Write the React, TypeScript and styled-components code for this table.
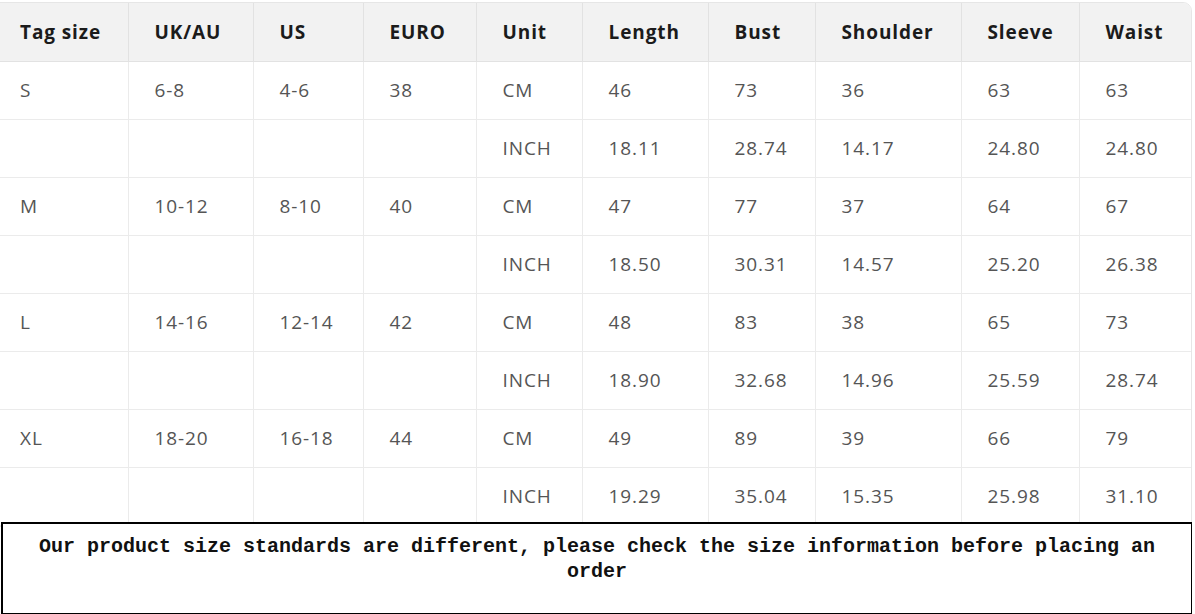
import React from "react";
import styled, { createGlobalStyle } from "styled-components";

const Global = createGlobalStyle`
  html, body { margin: 0; padding: 0; background: #fff; }
  body { width: 1195px; height: 614px; overflow: hidden; }
`;

const Page = styled.div`
  width: 1195px;
  height: 614px;
  display: flex;
  flex-direction: column;
  padding-top: 2px;
  box-sizing: border-box;
  overflow: hidden;
`;

const TableWrap = styled.div`
  margin-left: -7px;
  width: 1197px;
  border: 1px solid #e6e6e6;
  border-top-right-radius: 9px;
  overflow: hidden;
  flex-shrink: 0;
`;

const Table = styled.table`
  width: 100%;
  border-collapse: collapse;
  table-layout: fixed;
  font-family: "Open Sans", "Liberation Sans", sans-serif;
  font-size: 19px;
  line-height: 22px;
  letter-spacing: 0.9px;
`;

const Th = styled.th`
  background: #f2f2f2;
  color: #1b1b1b;
  font-weight: 700;
  text-align: left;
  padding: 0 0 0 26px;
  height: 58px;
  box-sizing: border-box;
  border-right: 1px solid #e2e2e2;
  border-bottom: 1px solid #e2e2e2;
  &:last-child { border-right: none; }
`;

const Td = styled.td`
  color: #555;
  font-weight: 400;
  text-align: left;
  padding: 0 0 0 26px;
  height: 58px;
  box-sizing: border-box;
  border-right: 1px solid #ebebeb;
  border-bottom: 1px solid #ebebeb;
  &:last-child { border-right: none; }
`;

const Note = styled.div`
  margin-top: -5px;
  position: relative;
  z-index: 1;
  margin-left: 1px;
  width: 1191px;
  height: 93px;
  flex-shrink: 0;
  box-sizing: border-box;
  background: #fff;
  border: 2px solid #000;
  border-right-width: 1px;
  padding: 10px 20px 0 20px;
  font-family: "Liberation Mono", "DejaVu Sans Mono", monospace;
  font-weight: 700;
  font-size: 20px;
  line-height: 25px;
  color: #111;
  text-align: center;
`;

const widths = [134, 125, 110, 113, 106, 126, 107, 146, 118, 112];
const headers = ["Tag size", "UK/AU", "US", "EURO", "Unit", "Length", "Bust", "Shoulder", "Sleeve", "Waist"];

const rows: string[][] = [
  ["S", "6-8", "4-6", "38", "CM", "46", "73", "36", "63", "63"],
  ["", "", "", "", "INCH", "18.11", "28.74", "14.17", "24.80", "24.80"],
  ["M", "10-12", "8-10", "40", "CM", "47", "77", "37", "64", "67"],
  ["", "", "", "", "INCH", "18.50", "30.31", "14.57", "25.20", "26.38"],
  ["L", "14-16", "12-14", "42", "CM", "48", "83", "38", "65", "73"],
  ["", "", "", "", "INCH", "18.90", "32.68", "14.96", "25.59", "28.74"],
  ["XL", "18-20", "16-18", "44", "CM", "49", "89", "39", "66", "79"],
  ["", "", "", "", "INCH", "19.29", "35.04", "15.35", "25.98", "31.10"],
];

export default function App() {
  return (
    <>
      <Global />
      <Page>
        <TableWrap>
          <Table>
            <colgroup>
              {widths.map((w, i) => (
                <col key={i} style={{ width: w }} />
              ))}
            </colgroup>
            <thead>
              <tr>
                {headers.map((h) => (
                  <Th key={h}>{h}</Th>
                ))}
              </tr>
            </thead>
            <tbody>
              {rows.map((r, i) => (
                <tr key={i}>
                  {r.map((c, j) => (
                    <Td key={j}>{c}</Td>
                  ))}
                </tr>
              ))}
            </tbody>
          </Table>
        </TableWrap>
        <Note>
          Our product size standards are different, please check the size information before placing an order
        </Note>
      </Page>
    </>
  );
}
